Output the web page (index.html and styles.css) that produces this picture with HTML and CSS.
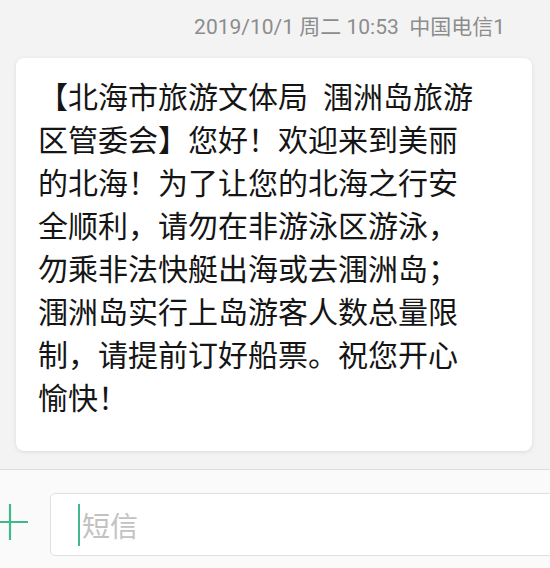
FILE: index.html
```html
<!DOCTYPE html>
<html>
<head>
  <title>短信</title>
  <link rel="stylesheet" href="styles.css">
</head>
<body>
  <div class="screen">
    <div class="stamp">2019/10/1 周二 10:53&nbsp; 中国电信1</div>

    <div class="thread">
      <div class="bubble">
        【北海市旅游文体局&ensp;涠洲岛旅游<br>
        区管委会】您好！欢迎来到美丽<br>
        的北海！为了让您的北海之行安<br>
        全顺利，请勿在非游泳区游泳，<br>
        勿乘非法快艇出海或去涠洲岛；<br>
        涠洲岛实行上岛游客人数总量限<br>
        制，请提前订好船票。祝您开心<br>
        愉快！
      </div>
    </div>

    <div class="compose">
      <svg class="plus" width="36" height="36" viewBox="0 0 36 36">
        <path d="M18 0 V36 M0 18 H36" stroke="#41b88b" stroke-width="2.2" fill="none"/>
      </svg>
      <div class="field">
        <span class="cursor"></span>
        <span class="placeholder">短信</span>
      </div>
    </div>
  </div>
</body>
</html>
```

FILE: styles.css
```css
body {
  margin: 0;
  background: #f3f3f3;
  font-family: "Noto Sans CJK SC", sans-serif;
}

.screen {
  width: 550px;
  height: 568px;
  display: flex;
  flex-direction: column;
  overflow: hidden;
}

.stamp {
  height: 43px;
  padding: 15px 45px 0 0;
  text-align: right;
  font-family: Roboto, "Noto Sans CJK SC", sans-serif;
  font-size: 21px;
  line-height: 25px;
  color: #8c8c8c;
}

.thread {
  flex: 1;
  padding: 0 18px 18px 16px;
}

.bubble {
  background: #fff;
  border-radius: 8px;
  box-shadow: 0 1px 4px rgba(0, 0, 0, 0.1);
  padding: 16px 16px 33px 22px;
  font-size: 30px;
  line-height: 43px;
  color: #151515;
  white-space: nowrap;
}

.compose {
  height: 99px;
  border-top: 1px solid #dedede;
  background: #fafafa;
  display: flex;
  align-items: flex-start;
  gap: 22px;
  padding-top: 23px;
  box-sizing: border-box;
}

.plus {
  margin-left: -8px;
  margin-top: 11px;
  flex-shrink: 0;
}

.field {
  flex: 1;
  height: 61px;
  margin-right: -10px;
  background: #fff;
  border: 1px solid #e0e0e0;
  border-radius: 5px;
  display: flex;
  align-items: center;
  padding-left: 27px;
}

.cursor {
  width: 2px;
  height: 42px;
  background: #41b88b;
}

.placeholder {
  margin-left: 2px;
  font-size: 28px;
  color: #c2c2c2;
}
```
